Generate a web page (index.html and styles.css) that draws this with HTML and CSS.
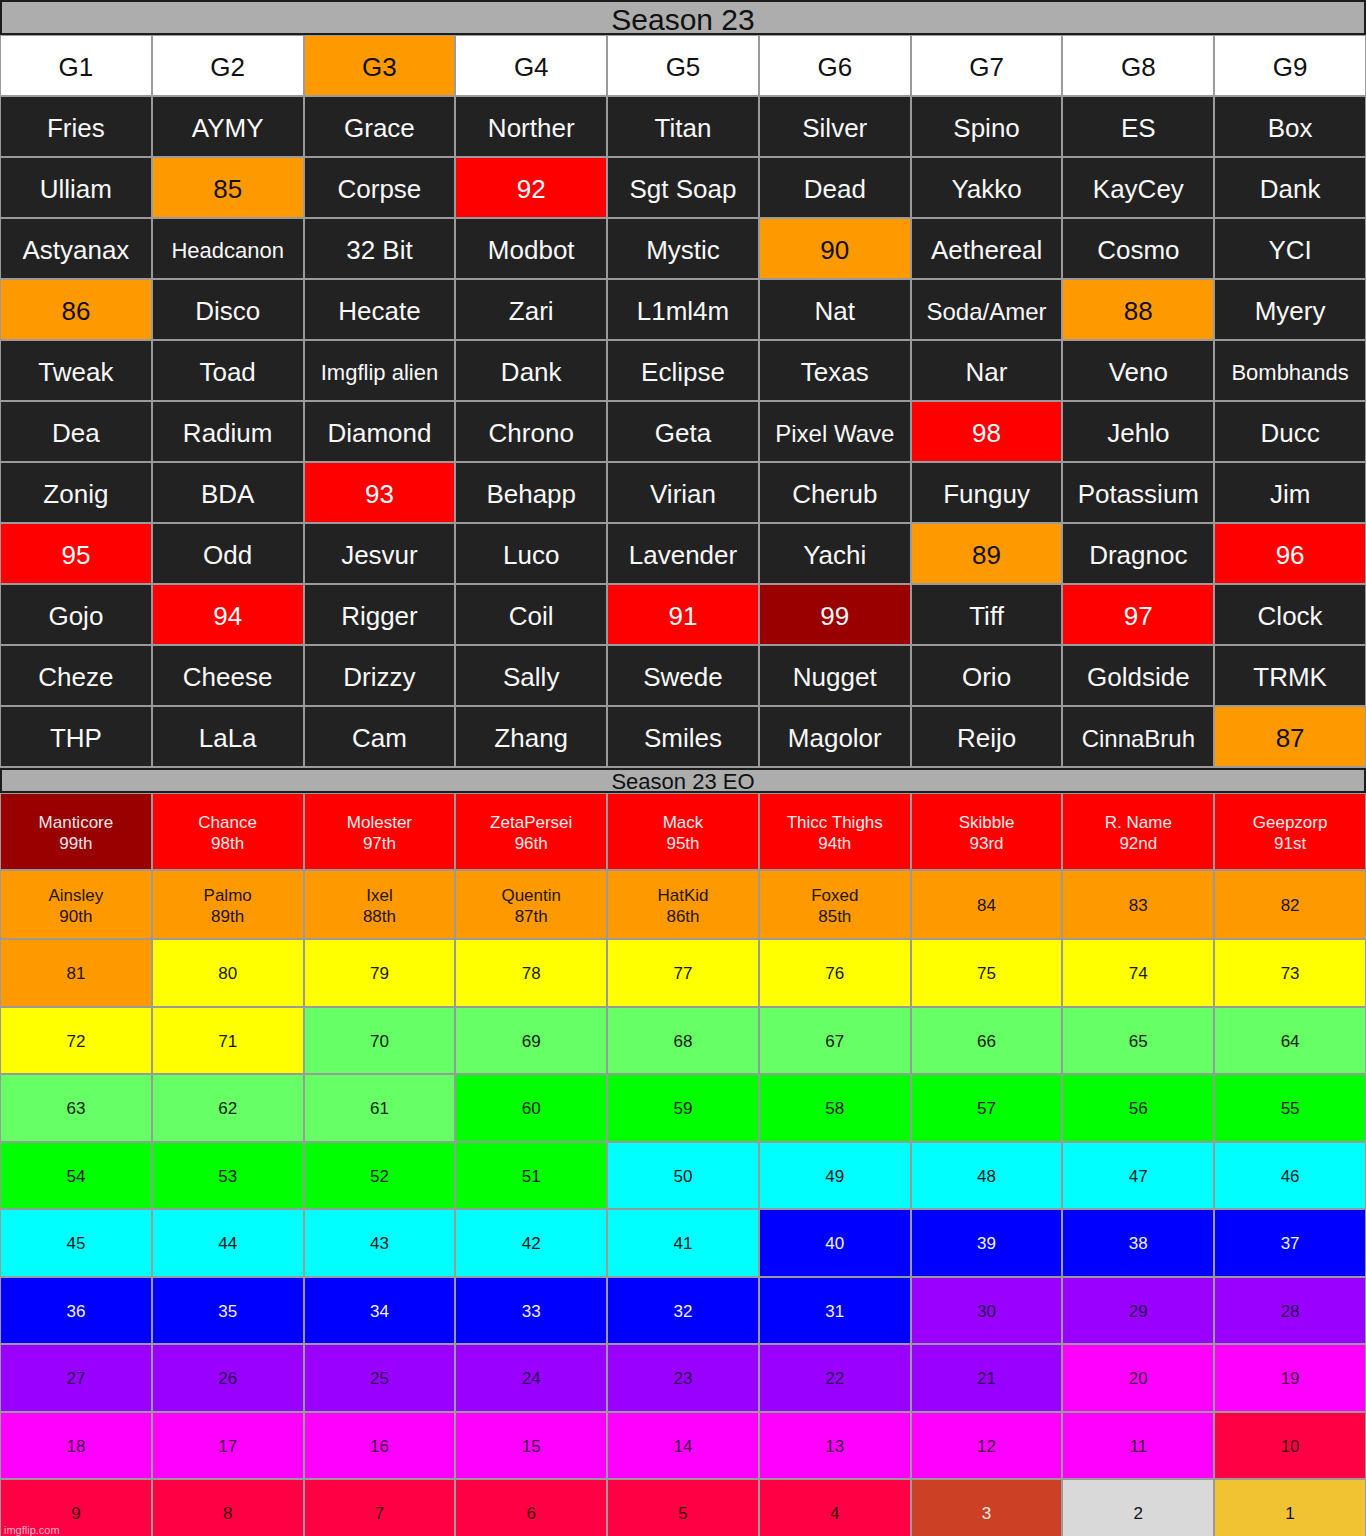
FILE: index.html
```html
<!DOCTYPE html>
<html lang="en">
<head>
<meta charset="utf-8">
<title>Season 23</title>
<link rel="stylesheet" href="styles.css">
</head>
<body>
<div class="sheet">
  <div class="banner banner-main">Season 23</div>
  <div class="grid main">
    <div class="cell head">G1</div><div class="cell head">G2</div><div class="cell head o">G3</div><div class="cell head">G4</div><div class="cell head">G5</div><div class="cell head">G6</div><div class="cell head">G7</div><div class="cell head">G8</div><div class="cell head">G9</div>

    <div class="cell">Fries</div><div class="cell">AYMY</div><div class="cell">Grace</div><div class="cell">Norther</div><div class="cell">Titan</div><div class="cell">Silver</div><div class="cell">Spino</div><div class="cell">ES</div><div class="cell">Box</div>

    <div class="cell">Ulliam</div><div class="cell o">85</div><div class="cell">Corpse</div><div class="cell r">92</div><div class="cell">Sgt Soap</div><div class="cell">Dead</div><div class="cell">Yakko</div><div class="cell">KayCey</div><div class="cell">Dank</div>

    <div class="cell">Astyanax</div><div class="cell sm">Headcanon</div><div class="cell">32 Bit</div><div class="cell">Modbot</div><div class="cell">Mystic</div><div class="cell o">90</div><div class="cell">Aethereal</div><div class="cell">Cosmo</div><div class="cell">YCI</div>

    <div class="cell o">86</div><div class="cell">Disco</div><div class="cell">Hecate</div><div class="cell">Zari</div><div class="cell">L1ml4m</div><div class="cell">Nat</div><div class="cell md">Soda/Amer</div><div class="cell o">88</div><div class="cell">Myery</div>

    <div class="cell">Tweak</div><div class="cell">Toad</div><div class="cell sm">Imgflip alien</div><div class="cell">Dank</div><div class="cell">Eclipse</div><div class="cell">Texas</div><div class="cell">Nar</div><div class="cell">Veno</div><div class="cell sm">Bombhands</div>

    <div class="cell">Dea</div><div class="cell">Radium</div><div class="cell">Diamond</div><div class="cell">Chrono</div><div class="cell">Geta</div><div class="cell md">Pixel Wave</div><div class="cell r">98</div><div class="cell">Jehlo</div><div class="cell">Ducc</div>

    <div class="cell">Zonig</div><div class="cell">BDA</div><div class="cell r">93</div><div class="cell">Behapp</div><div class="cell">Virian</div><div class="cell">Cherub</div><div class="cell">Funguy</div><div class="cell">Potassium</div><div class="cell">Jim</div>

    <div class="cell r">95</div><div class="cell">Odd</div><div class="cell">Jesvur</div><div class="cell">Luco</div><div class="cell">Lavender</div><div class="cell">Yachi</div><div class="cell o">89</div><div class="cell">Dragnoc</div><div class="cell r">96</div>

    <div class="cell">Gojo</div><div class="cell r">94</div><div class="cell">Rigger</div><div class="cell">Coil</div><div class="cell r">91</div><div class="cell dr">99</div><div class="cell">Tiff</div><div class="cell r">97</div><div class="cell">Clock</div>

    <div class="cell">Cheze</div><div class="cell">Cheese</div><div class="cell">Drizzy</div><div class="cell">Sally</div><div class="cell">Swede</div><div class="cell">Nugget</div><div class="cell">Orio</div><div class="cell">Goldside</div><div class="cell">TRMK</div>

    <div class="cell">THP</div><div class="cell">LaLa</div><div class="cell">Cam</div><div class="cell">Zhang</div><div class="cell">Smiles</div><div class="cell">Magolor</div><div class="cell">Reijo</div><div class="cell md">CinnaBruh</div><div class="cell o">87</div>
  </div>

  <div class="banner banner-eo">Season 23 EO</div>
  <div class="grid eo">
    <div class="ec dred">Manticore<br>99th</div><div class="ec red">Chance<br>98th</div><div class="ec red">Molester<br>97th</div><div class="ec red">ZetaPersei<br>96th</div><div class="ec red">Mack<br>95th</div><div class="ec red">Thicc Thighs<br>94th</div><div class="ec red">Skibble<br>93rd</div><div class="ec red">R. Name<br>92nd</div><div class="ec red">Geepzorp<br>91st</div>

    <div class="ec org">Ainsley<br>90th</div><div class="ec org">Palmo<br>89th</div><div class="ec org">Ixel<br>88th</div><div class="ec org">Quentin<br>87th</div><div class="ec org">HatKid<br>86th</div><div class="ec org">Foxed<br>85th</div><div class="ec org">84</div><div class="ec org">83</div><div class="ec org">82</div>

    <div class="ec org">81</div><div class="ec yel">80</div><div class="ec yel">79</div><div class="ec yel">78</div><div class="ec yel">77</div><div class="ec yel">76</div><div class="ec yel">75</div><div class="ec yel">74</div><div class="ec yel">73</div>

    <div class="ec yel">72</div><div class="ec yel">71</div><div class="ec lgr">70</div><div class="ec lgr">69</div><div class="ec lgr">68</div><div class="ec lgr">67</div><div class="ec lgr">66</div><div class="ec lgr">65</div><div class="ec lgr">64</div>

    <div class="ec lgr">63</div><div class="ec lgr">62</div><div class="ec lgr">61</div><div class="ec grn">60</div><div class="ec grn">59</div><div class="ec grn">58</div><div class="ec grn">57</div><div class="ec grn">56</div><div class="ec grn">55</div>

    <div class="ec grn">54</div><div class="ec grn">53</div><div class="ec grn">52</div><div class="ec grn">51</div><div class="ec cyn">50</div><div class="ec cyn">49</div><div class="ec cyn">48</div><div class="ec cyn">47</div><div class="ec cyn">46</div>

    <div class="ec cyn">45</div><div class="ec cyn">44</div><div class="ec cyn">43</div><div class="ec cyn">42</div><div class="ec cyn">41</div><div class="ec blu">40</div><div class="ec blu">39</div><div class="ec blu">38</div><div class="ec blu">37</div>

    <div class="ec blu">36</div><div class="ec blu">35</div><div class="ec blu">34</div><div class="ec blu">33</div><div class="ec blu">32</div><div class="ec blu">31</div><div class="ec pur">30</div><div class="ec pur">29</div><div class="ec pur">28</div>

    <div class="ec pur">27</div><div class="ec pur">26</div><div class="ec pur">25</div><div class="ec pur">24</div><div class="ec pur">23</div><div class="ec pur">22</div><div class="ec pur">21</div><div class="ec mag">20</div><div class="ec mag">19</div>

    <div class="ec mag">18</div><div class="ec mag">17</div><div class="ec mag">16</div><div class="ec mag">15</div><div class="ec mag">14</div><div class="ec mag">13</div><div class="ec mag">12</div><div class="ec mag">11</div><div class="ec cri">10</div>

    <div class="ec cri">9</div><div class="ec cri">8</div><div class="ec cri">7</div><div class="ec cri">6</div><div class="ec cri">5</div><div class="ec cri">4</div><div class="ec bronze">3</div><div class="ec silver">2</div><div class="ec gold">1</div>
  </div>
  <span class="watermark">imgflip.com</span>
</div>
</body>
</html>
```

FILE: styles.css
```css
* {
  box-sizing: border-box;
}

html, body {
  margin: 0;
  padding: 0;
  background: #ffffff;
}

body {
  font-family: "Liberation Sans", Arial, sans-serif;
}

.sheet {
  position: relative;
  width: 1366px;
  background: #9a9a9a;
}

.banner {
  display: flex;
  align-items: center;
  justify-content: center;
  background: #adadad;
  border: 2px solid #1c1c1c;
  color: #111111;
  white-space: nowrap;
}

.banner-main {
  height: 35px;
  font-size: 30px;
  line-height: 31px;
  padding-top: 3px;
}

.banner-eo {
  height: 25px;
  font-size: 22px;
  line-height: 21px;
  padding-top: 1px;
}

.grid {
  display: grid;
  grid-template-columns: repeat(9, 1fr);
  gap: 2px;
  padding-left: 1px;
  padding-right: 1px;
}

.main {
  grid-auto-rows: 59px;
  padding-top: 1px;
  padding-bottom: 2px;
}

.eo {
  grid-template-rows: 75px 67px repeat(9, 65.5px);
  padding-top: 1px;
}

.cell {
  display: flex;
  align-items: center;
  justify-content: center;
  background: #222222;
  color: #f8f8f8;
  font-size: 26px;
  white-space: nowrap;
  padding-top: 4px;
}

.cell.head {
  background: #ffffff;
  color: #111111;
}

.cell.o {
  background: #ff9900;
  color: #111111;
}

.cell.r {
  background: #ff0000;
  color: #fbfbfb;
}

.cell.dr {
  background: #990000;
  color: #f5f5f5;
}

.cell.sm {
  font-size: 22px;
}

.cell.md {
  font-size: 24px;
}

.ec {
  display: flex;
  align-items: center;
  justify-content: center;
  text-align: center;
  font-size: 17px;
  line-height: 21px;
  color: #111111;
  white-space: nowrap;
  padding-top: 2px;
}

.ec.red { background: #ff0000; color: #fde9e9; }
.ec.dred { background: #990000; color: #f4e4e4; }
.ec.org { background: #ff9900; color: #241500; }
.ec.yel { background: #ffff00; color: #1a1a00; }
.ec.lgr { background: #66ff66; color: #112211; }
.ec.grn { background: #00ff00; color: #0a220a; }
.ec.cyn { background: #00ffff; color: #0b2222; }
.ec.blu { background: #0000ff; color: #f0f0ff; }
.ec.pur { background: #9900ff; color: #2a0055; }
.ec.mag { background: #ff00ff; color: #440044; }
.ec.cri { background: #ff0044; color: #44000f; }
.ec.bronze { background: #cc4125; color: #fbeae6; }
.ec.silver { background: #d9d9d9; color: #111111; }
.ec.gold { background: #f1c232; color: #111111; }

.watermark {
  position: absolute;
  left: 4px;
  bottom: 10px;
  font-size: 11px;
  color: rgba(255, 255, 255, 0.7);
  pointer-events: none;
}
```
